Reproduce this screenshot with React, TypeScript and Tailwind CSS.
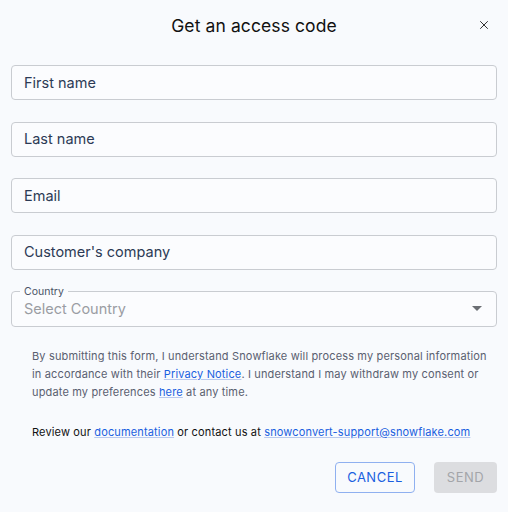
import { X } from 'lucide-react';

const fields = ['First name', 'Last name', 'Email', "Customer's company"];

export default function App() {
  return (
    <div className="w-[508px] h-[512px] bg-[#f8fafd] font-['Inter',sans-serif] relative">
      {/* Header */}
      <div className="h-[52px] flex items-center justify-center">
        <h1 className="text-[17.5px] text-[#111] tracking-[0.1px]">Get an access code</h1>
      </div>
      <button className="absolute right-[17px] top-[18px] text-[#222]">
        <X size={14} strokeWidth={1.6} />
      </button>

      {/* Form */}
      <div className="px-[11px] pt-[13px] flex flex-col gap-[21.5px]">
        {fields.map(f => (
          <div key={f} className="h-[35px] rounded-[4px] border border-[#c9ccd1] bg-[#fbfcfe] flex items-center px-[12px]">
            <span className="text-[14.5px] text-[#2c3a55]">{f}</span>
          </div>
        ))}
        <fieldset className="h-[41px] -mt-[5px] rounded-[4px] border border-[#c9ccd1] bg-[#fbfcfe] px-[8px]">
          <legend className="px-[4px] text-[10.5px] leading-[11px] text-[#4a5366]">Country</legend>
          <div className="flex items-center justify-between pl-[4px] pr-[6px] mt-[1px]">
            <span className="text-[14.5px] text-[#9a9da3]">Select Country</span>
            <svg width="10" height="5" viewBox="0 0 10 5"><path d="M0 0h10L5 5z" fill="#6b6e73" /></svg>
          </div>
        </fieldset>
      </div>

      {/* Notice */}
      <div className="pl-[32px] pr-[12px] pt-[20px] text-[11px] leading-[18px] text-[#5a6070] tracking-[0.15px]">
        <p>
          By submitting this form, I understand Snowflake will process my personal information in accordance with their{' '}
          <a className="text-[#1a5fe0] underline decoration-[#b9c9ee]">Privacy Notice</a>. I understand I may withdraw my consent or update my preferences{' '}
          <a className="text-[#1a5fe0] underline decoration-[#b9c9ee]">here</a> at any time.
        </p>
        <p className="mt-[22px] text-[#111]">
          Review our <a className="text-[#1a5fe0] underline decoration-[#b9c9ee]">documentation</a> or contact us at{' '}
          <a className="text-[#1a5fe0] underline decoration-[#b9c9ee]">snowconvert-support@snowflake.com</a>
        </p>
      </div>

      {/* Actions */}
      <div className="flex justify-end gap-[19px] px-[11px] pt-[21px]">
        <button className="h-[31px] w-[80px] rounded-[4px] border border-[#8fb0f0] text-[#1a5fe0] text-[13px] tracking-[0.5px]">
          CANCEL
        </button>
        <button className="h-[31px] w-[63px] rounded-[4px] bg-[#dcdde0] text-[#a3a5a9] text-[13px] tracking-[0.5px]">
          SEND
        </button>
      </div>
    </div>
  );
}
